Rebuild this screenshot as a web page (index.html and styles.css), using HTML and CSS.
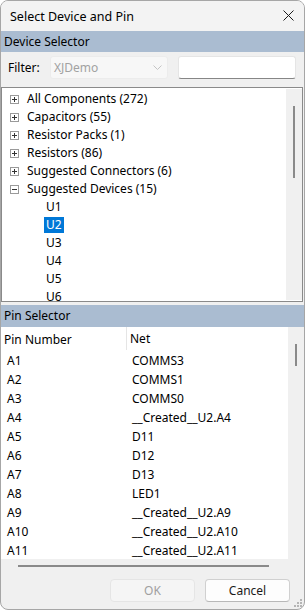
FILE: index.html
```html
<!DOCTYPE html>
<html lang="en">
<head>
  <meta charset="UTF-8">
  <title>Select Device and Pin</title>
  <link rel="stylesheet" href="styles.css">
</head>
<body>

<div class="window">
  <!-- Title bar -->
  <div class="titlebar">
    <span class="title">Select Device and Pin</span>
    <svg class="close" width="11" height="11" viewBox="0 0 11 11">
      <path d="M0.5 0.5 L10.5 10.5 M10.5 0.5 L0.5 10.5" stroke="#1b1b1b" stroke-width="1" fill="none"/>
    </svg>
  </div>

  <!-- Device selector -->
  <div class="section-head">Device Selector</div>
  <div class="filter-row">
    <label class="filter-label">Filter:</label>
    <div class="combo disabled">
      <span>XJDemo</span>
      <svg width="9" height="5" viewBox="0 0 9 5">
        <path d="M0.5 0.5 L4.5 4.5 L8.5 0.5" stroke="#c4c4c4" stroke-width="1" fill="none"/>
      </svg>
    </div>
    <input class="search" type="text">
  </div>

  <div class="tree">
    <ul class="tree-list">
      <li class="node"><span class="expander plus"></span>All Components (272)</li>
      <li class="node"><span class="expander plus"></span>Capacitors (55)</li>
      <li class="node"><span class="expander plus"></span>Resistor Packs (1)</li>
      <li class="node"><span class="expander plus"></span>Resistors (86)</li>
      <li class="node"><span class="expander plus"></span>Suggested Connectors (6)</li>
      <li class="node"><span class="expander minus"></span>Suggested Devices (15)</li>
      <li class="leaf"><span>U1</span></li>
      <li class="leaf selected"><span>U2</span></li>
      <li class="leaf"><span>U3</span></li>
      <li class="leaf"><span>U4</span></li>
      <li class="leaf"><span>U5</span></li>
      <li class="leaf"><span>U6</span></li>
    </ul>
    <div class="vscroll tree-scroll"><div class="thumb"></div></div>
  </div>

  <!-- Pin selector -->
  <div class="section-head pin-head">Pin Selector</div>
  <div class="pins">
    <div class="pins-body">
      <div class="pins-header">
        <div class="col-pin">Pin Number</div>
        <div class="col-net">Net</div>
      </div>
      <div class="pin-row"><div class="col-pin">A1</div><div class="col-net">COMMS3</div></div>
      <div class="pin-row"><div class="col-pin">A2</div><div class="col-net">COMMS1</div></div>
      <div class="pin-row"><div class="col-pin">A3</div><div class="col-net">COMMS0</div></div>
      <div class="pin-row"><div class="col-pin">A4</div><div class="col-net">__Created__U2.A4</div></div>
      <div class="pin-row"><div class="col-pin">A5</div><div class="col-net">D11</div></div>
      <div class="pin-row"><div class="col-pin">A6</div><div class="col-net">D12</div></div>
      <div class="pin-row"><div class="col-pin">A7</div><div class="col-net">D13</div></div>
      <div class="pin-row"><div class="col-pin">A8</div><div class="col-net">LED1</div></div>
      <div class="pin-row"><div class="col-pin">A9</div><div class="col-net">__Created__U2.A9</div></div>
      <div class="pin-row"><div class="col-pin">A10</div><div class="col-net">__Created__U2.A10</div></div>
      <div class="pin-row"><div class="col-pin">A11</div><div class="col-net">__Created__U2.A11</div></div>
    </div>
    <div class="vscroll pin-scroll"><div class="thumb"></div></div>
  </div>
  <div class="hscroll"><div class="thumb"></div></div>

  <!-- Buttons -->
  <div class="buttons">
    <button class="btn" disabled>OK</button>
    <button class="btn">Cancel</button>
  </div>

  <svg class="grip" width="9" height="9" viewBox="0 0 9 9">
    <rect x="6" y="0" width="2" height="2" fill="#b5b5b5"/>
    <rect x="3" y="3" width="2" height="2" fill="#b5b5b5"/>
    <rect x="6" y="3" width="2" height="2" fill="#b5b5b5"/>
    <rect x="0" y="6" width="2" height="2" fill="#b5b5b5"/>
    <rect x="3" y="6" width="2" height="2" fill="#b5b5b5"/>
    <rect x="6" y="6" width="2" height="2" fill="#b5b5b5"/>
  </svg>
</div>

</body>
</html>
```

FILE: styles.css
```css
body {
  margin: 0;
  font-family: "Noto Sans", "Open Sans", sans-serif;
  font-size: 12px;
  color: #000;
  background: #fff;
}

.window {
  position: relative;
  width: 305px;
  height: 610px;
  box-sizing: border-box;
  border: 1px solid #a6a6a6;
  border-radius: 8px;
  background: #f0f0f0;
  display: flex;
  flex-direction: column;
  overflow: hidden;
}

/* title bar */
.titlebar {
  height: 30px;
  flex: none;
  display: flex;
  align-items: center;
  justify-content: space-between;
  padding: 0 10px 0 9px;
  background: #f3f3f3;
  font-size: 12.5px;
}

.close {
  margin-top: -1px;
}

/* section headers */
.section-head {
  height: 21px;
  flex: none;
  line-height: 21px;
  padding-left: 3px;
  background: #aabcd1;
}

.pin-head {
  height: 22px;
  line-height: 22px;
}

/* filter row */
.filter-row {
  height: 34px;
  flex: none;
  display: flex;
  align-items: flex-start;
  padding-top: 4px;
  box-sizing: border-box;
}

.filter-label {
  width: 42px;
  padding-left: 7px;
  line-height: 23px;
}

.combo {
  width: 118px;
  height: 23px;
  box-sizing: border-box;
  display: flex;
  align-items: center;
  justify-content: space-between;
  padding: 0 5px 0 3px;
  border: 1px solid #ececec;
  border-radius: 3px;
  background: #f7f7f7;
}

.combo.disabled {
  color: #a2a2a2;
}

.search {
  width: 118px;
  height: 23px;
  box-sizing: border-box;
  margin: 0 0 0 10px;
  border: 1px solid #e5e5e5;
  border-bottom-color: #868686;
  border-radius: 3px;
  background: #fff;
  padding: 0 4px;
  font: inherit;
}

/* device tree */
.tree {
  height: 215px;
  flex: none;
  box-sizing: border-box;
  margin: 1px 1px 3px 0;
  border: 1px solid #8a8a8a;
  background: #fff;
  display: flex;
  overflow: hidden;
}

.tree-list {
  flex: 1;
  list-style: none;
  margin: 0;
  padding: 2px 0 0 0;
}

.tree-list li {
  height: 18px;
  line-height: 18px;
  white-space: nowrap;
}

.node {
  display: flex;
  align-items: center;
  padding-left: 8px;
}

.expander {
  position: relative;
  width: 9px;
  height: 9px;
  box-sizing: border-box;
  border: 1px solid #9a9a9a;
  margin-right: 8px;
  background: #fff;
}

.expander::before,
.plus::after {
  content: "";
  position: absolute;
  background: #333;
}

.expander::before {
  left: 1px;
  top: 3px;
  width: 5px;
  height: 1px;
}

.plus::after {
  left: 3px;
  top: 1px;
  width: 1px;
  height: 5px;
}

.leaf {
  padding-left: 42px;
}

.leaf span {
  display: inline-block;
  padding: 0 2px;
  line-height: 16px;
}

.leaf.selected span {
  background: #0078d7;
  color: #fff;
}

/* scrollbars */
.vscroll {
  position: relative;
  width: 16px;
  flex: none;
  background: #f0f0f0;
}

.tree-scroll {
  margin: 1px 0;
}

.vscroll .thumb {
  position: absolute;
  left: 7px;
  width: 2px;
  background: #8a8a8a;
}

.tree-scroll .thumb {
  top: 17px;
  height: 72px;
}

.pin-scroll .thumb {
  top: 17px;
  height: 22px;
}

/* pin list */
.pins {
  height: 232px;
  flex: none;
  display: flex;
  overflow: hidden;
}

.pins-body {
  flex: 1;
  background: #fff;
  overflow: hidden;
}

.pins-header {
  height: 25px;
  display: flex;
  align-items: center;
}

.pins-header .col-pin {
  width: 122px;
  padding-left: 3px;
}

.pins-header .col-net {
  height: 23px;
  line-height: 23px;
  margin-top: -2px;
  border-left: 1px solid #e5e5e5;
  padding-left: 3px;
}

.pin-row {
  height: 19px;
  line-height: 18px;
  display: flex;
}

.pin-row .col-pin {
  width: 120px;
  padding-left: 6px;
}

.pin-row .col-net {
  padding-left: 5px;
}

.hscroll {
  position: relative;
  height: 16px;
  flex: none;
}

.hscroll .thumb {
  position: absolute;
  left: 17px;
  top: 6px;
  width: 251px;
  height: 2px;
  background: #8a8a8a;
}

/* buttons */
.buttons {
  display: flex;
  justify-content: flex-end;
  gap: 10px;
  margin-top: 4px;
  padding-right: 14px;
}

.btn {
  width: 85px;
  height: 23px;
  border: 1px solid #d0d0d0;
  border-bottom-color: #b8b8b8;
  border-radius: 4px;
  background: #fdfdfd;
  font: inherit;
  color: #1a1a1a;
  padding: 0;
}

.btn:disabled {
  background: #f5f5f5;
  border-color: #e5e5e5;
  color: #a0a0a0;
}

.grip {
  position: absolute;
  right: 1px;
  bottom: 1px;
}
```
